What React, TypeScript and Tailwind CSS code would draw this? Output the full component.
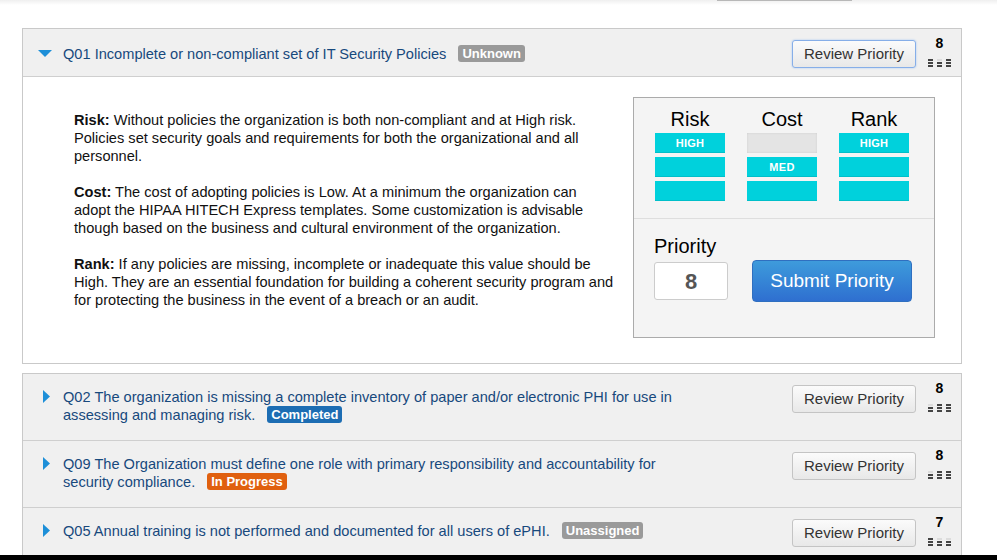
import React from 'react';

type Level = 1 | 2 | 3;

const questions = [
  {
    id: 'Q02',
    title: 'Q02 The organization is missing a complete inventory of paper and/or electronic PHI for use in assessing and managing risk.',
    status: 'Completed',
    badge: 'bg-[#1c6db3]',
    priority: 8,
    levels: [2, 3, 3] as Level[],
  },
  {
    id: 'Q09',
    title: 'Q09 The Organization must define one role with primary responsibility and accountability for security compliance.',
    status: 'In Progress',
    badge: 'bg-[#e0600f]',
    priority: 8,
    levels: [2, 3, 3] as Level[],
  },
  {
    id: 'Q05',
    title: 'Q05 Annual training is not performed and documented for all users of ePHI.',
    status: 'Unassigned',
    badge: 'bg-[#9a9a9a]',
    priority: 7,
    levels: [3, 2, 2] as Level[],
  },
];

// tiny 3x3 bar meter under the priority number
const MiniMeter: React.FC<{ levels: Level[] }> = ({ levels }) => (
  <div className="flex gap-[4px] mt-[9px]">
    {levels.map((lv, c) => (
      <div key={c} className="flex flex-col gap-[1px]">
        {[3, 2, 1].map((r) => (
          <div key={r} className={`w-[5px] h-[2px] ${r <= lv ? 'bg-[#444]' : 'bg-[#dcdcdc]'}`} />
        ))}
      </div>
    ))}
  </div>
);

const PriorityBox: React.FC<{ value: number; levels: Level[]; focused?: boolean }> = ({ value, levels, focused }) => (
  <div className="flex items-start">
    <button
      className={`mt-[4px] w-[124px] h-[28px] rounded-[3px] border text-[15px] text-[#333] bg-gradient-to-b from-[#fbfbfb] to-[#e8e8e8] ${
        focused ? 'border-[#86aee8] shadow-[0_0_2px_#9cc0f2]' : 'border-[#c4c4c4]'
      }`}
    >
      Review Priority
    </button>
    <div className="ml-[12px] w-[23px] flex flex-col items-center">
      <div className="text-[14px] font-bold leading-[14px] text-black">{value}</div>
      <MiniMeter levels={levels} />
    </div>
  </div>
);

const Triangle: React.FC<{ open?: boolean }> = ({ open }) =>
  open ? (
    <svg width="14" height="7" viewBox="0 0 14 7" className="shrink-0">
      <polygon points="0,0 14,0 7,7" fill="#1d8fd8" />
    </svg>
  ) : (
    <svg width="7" height="13" viewBox="0 0 7 13" className="shrink-0">
      <polygon points="0,0 7,6.5 0,13" fill="#1d8fd8" />
    </svg>
  );

const Cell: React.FC<{ label?: string; off?: boolean }> = ({ label, off }) => (
  <div
    className={`w-[70px] h-[20px] flex items-center justify-center text-[11px] font-bold text-white tracking-[0.3px] ${
      off ? 'bg-[#e4e4e4] shadow-[inset_0_0_2px_#c8c8c8]' : 'bg-[#00d1dc] shadow-[inset_0_-1px_0_#00bfc9]'
    }`}
  >
    {label}
  </div>
);

const App: React.FC = () => {
  return (
    <div className="relative h-[560px] overflow-hidden bg-white font-['Liberation_Sans',Arial,sans-serif]">
      {/* top edge */}
      <div className="h-[5px] bg-gradient-to-b from-[#efefef] to-white">
        <div className="ml-[717px] w-[135px] h-[1px] bg-[#b8b8b8]" />
      </div>

      <div className="ml-[22px] w-[940px] mt-[23px]">
        {/* expanded Q01 */}
        <div className="border border-[#c9c9c9]">
          <div className="h-[48px] bg-[#f0f0f0] border-b border-[#cfcfcf] flex items-start pr-[10px]">
            <div className="pl-[15px] pt-[21px]">
              <Triangle open />
            </div>
            <div className="ml-[11px] pt-[16px] text-[14.6px] leading-[18px] text-[#17497d]">
              Q01 Incomplete or non-compliant set of IT Security Policies
              <span className="inline-block ml-[12px] px-[4px] rounded-[3px] bg-[#9a9a9a] text-white text-[13px] font-bold leading-[17px] align-[1px]">
                Unknown
              </span>
            </div>
            <div className="ml-auto pt-[7px]">
              <PriorityBox value={8} levels={[3, 2, 3]} focused />
            </div>
          </div>

          <div className="h-[286px] flex items-start">
            <div className="pl-[51px] pt-[34px] w-[592px] text-[14.6px] leading-[18px] text-[#111] flex flex-col gap-[18px]">
              <p>
                <b>Risk:</b> Without policies the organization is both non-compliant and at High risk. Policies set security goals and requirements for both the organizational and all personnel.
              </p>
              <p>
                <b>Cost:</b> The cost of adopting policies is Low. At a minimum the organization can adopt the HIPAA HITECH Express templates. Some customization is advisable though based on the business and cultural environment of the organization.
              </p>
              <p>
                <b>Rank:</b> If any policies are missing, incomplete or inadequate this value should be High. They are an essential foundation for building a coherent security program and for protecting the business in the event of a breach or an audit.
              </p>
            </div>

            <div className="ml-auto mr-[26px] mt-[20px] w-[302px] h-[241px] bg-[#f4f4f4] border border-[#ababab]">
              <div className="h-[121px] border-b border-[#dedede] pl-[21px] pt-[10px] flex gap-[22px]">
                {[
                  { h: 'Risk', cells: [{ label: 'HIGH' }, {}, {}] },
                  { h: 'Cost', cells: [{ off: true }, { label: 'MED' }, {}] },
                  { h: 'Rank', cells: [{ label: 'HIGH' }, {}, {}] },
                ].map((col) => (
                  <div key={col.h} className="w-[70px] flex flex-col items-center">
                    <div className="text-[20px] leading-[23px] text-black mb-[2px]">{col.h}</div>
                    <div className="flex flex-col gap-[4px]">
                      {col.cells.map((c, i) => (
                        <Cell key={i} {...c} />
                      ))}
                    </div>
                  </div>
                ))}
              </div>
              <div className="pl-[20px] pt-[16px]">
                <div className="text-[20px] leading-[23px] text-black">Priority</div>
                <div className="flex items-start mt-[2px]">
                  <div className="mt-[2px] w-[74px] h-[38px] bg-white border border-[#cccccc] rounded-[3px] flex items-center justify-center text-[22px] font-bold text-[#555]">
                    8
                  </div>
                  <button className="ml-[24px] w-[160px] h-[42px] rounded-[4px] border border-[#2f6fc0] bg-gradient-to-b from-[#3e9bdb] to-[#2f6fd0] text-white text-[19px]">
                    Submit Priority
                  </button>
                </div>
              </div>
            </div>
          </div>
        </div>

        {/* collapsed rows */}
        <div className="mt-[9px] border border-[#c9c9c9] border-b-0">
          {questions.map((q) => (
            <div key={q.id} className="h-[67px] bg-[#f0f0f0] border-b border-[#cfcfcf] flex items-start pr-[10px]">
              <div className="pl-[20px] pt-[16px]">
                <Triangle />
              </div>
              <div className="ml-[13px] pt-[14px] w-[620px] text-[14.6px] leading-[18px] text-[#17497d]">
                {q.title}
                <span className={`inline-block ml-[12px] px-[4px] rounded-[3px] ${q.badge} text-white text-[13px] font-bold leading-[17px] align-[1px]`}>
                  {q.status}
                </span>
              </div>
              <div className="ml-auto pt-[7px]">
                <PriorityBox value={q.priority} levels={q.levels} />
              </div>
            </div>
          ))}
        </div>
      </div>

      {/* bottom edge of the capture */}
      <div className="absolute left-0 right-0 bottom-0 h-[5px] bg-black" />
    </div>
  );
};

export default App;
